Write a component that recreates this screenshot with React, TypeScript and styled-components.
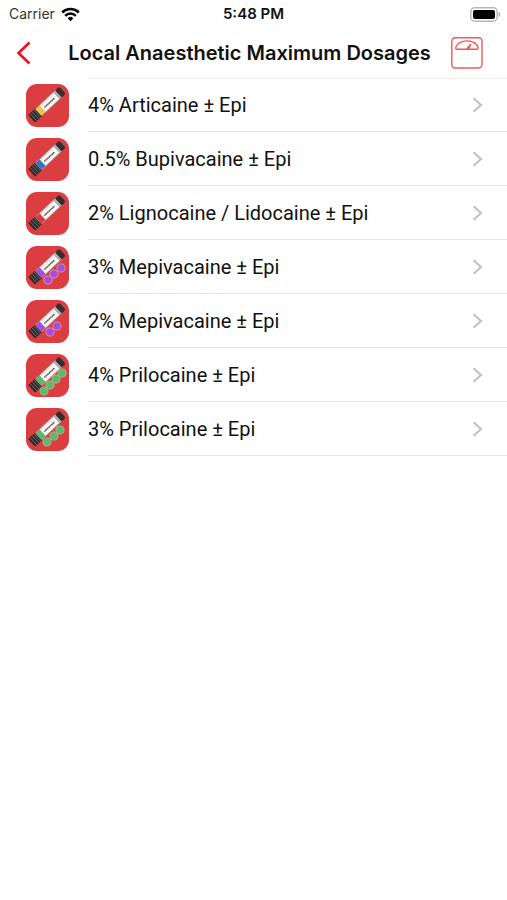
import React from "react";
import styled, { createGlobalStyle } from "styled-components";

const GlobalStyle = createGlobalStyle`
  * { box-sizing: border-box; }
  body {
    margin: 0;
    background: #fff;
    color: #111;
    font-family: Inter, "Liberation Sans", sans-serif;
  }
`;

const Screen = styled.div`
  min-height: 100vh;
  background: #fff;
`;

const StatusBar = styled.div`
  display: grid;
  grid-template-columns: 1fr auto 1fr;
  align-items: center;
  height: 28px;
  padding: 0 6px;
  font-size: 14px;
  line-height: 20px;
`;

const Carrier = styled.div`
  display: flex;
  align-items: center;
  gap: 6px;
  padding-left: 3px;
  color: #333;
`;

const Clock = styled.time`
  font-size: 15px;
  font-weight: 600;
`;

const BatterySlot = styled.div`
  display: flex;
  justify-content: flex-end;
`;

const NavBar = styled.header`
  display: grid;
  grid-template-columns: 48px 1fr 56px;
  align-items: center;
  height: 50px;
`;

const IconButton = styled.button`
  display: flex;
  align-items: center;
  justify-content: center;
  height: 44px;
  padding: 0;
  border: 0;
  background: none;
  cursor: pointer;
`;

const ScaleButton = styled(IconButton)`
  justify-content: flex-start;
`;

const Title = styled.h1`
  margin: 0;
  font-size: 20px;
  line-height: 28px;
  font-weight: 600;
  text-align: center;
  white-space: nowrap;
`;

const List = styled.ul`
  margin: 0;
  padding: 0;
  list-style: none;
`;

const Row = styled.a`
  display: grid;
  grid-template-columns: 62px 1fr;
  align-items: stretch;
  height: 54px;
  padding-left: 26px;
  color: inherit;
  text-decoration: none;
`;

const Thumb = styled.span`
  display: flex;
  align-items: center;
`;

const RowBody = styled.span<{ $first: boolean }>`
  display: flex;
  align-items: center;
  justify-content: space-between;
  padding-right: 24px;
  border-top: ${(p) => (p.$first ? "1px solid #ededee" : "0")};
  border-bottom: 1px solid #e6e6e8;
`;

const Label = styled.span`
  font-family: Roboto, Inter, sans-serif;
  font-size: 20px;
  line-height: 26px;
`;

type Drug = { name: string; band: string; dots?: string; at?: number[][] };

const PURPLE = "#a84be0";
const GREEN = "#55bf67";

const drugs: Drug[] = [
  { name: "4% Articaine ± Epi", band: "#f2c33c" },
  { name: "0.5% Bupivacaine ± Epi", band: "#2f77bd" },
  { name: "2% Lignocaine / Lidocaine ± Epi", band: "#e3343a" },
  { name: "3% Mepivacaine ± Epi", band: PURPLE, dots: PURPLE, at: [[22, 34], [28, 28], [35, 22]] },
  { name: "2% Mepivacaine ± Epi", band: PURPLE, dots: PURPLE, at: [[24, 32], [31, 26]] },
  { name: "4% Prilocaine ± Epi", band: GREEN, dots: GREEN, at: [[18, 37], [24, 31], [30, 25], [36, 19]] },
  { name: "3% Prilocaine ± Epi", band: GREEN, dots: GREEN, at: [[21, 34], [28, 28], [34, 22]] },
];

function Cartridge({ band, dots, at = [] }: Drug) {
  return (
    <svg width="43" height="43" viewBox="0 0 43 43" aria-hidden="true">
      <rect width="43" height="43" rx="11" fill="#dc3d40" />
      <g transform="translate(21 20.5) rotate(-43)">
        <rect x="-21" y="-5.2" width="10" height="10.4" rx="1" fill="#302b2d" />
        <path d="M-18.6-5.2v10.4M-16-5.2v10.4M-13.4-5.2v10.4" stroke="#777274" strokeWidth=".8" />
        <rect x="-12" y="-5" width="28" height="10" rx="1" fill="#9d9394" />
        <rect x="-11.5" y="-4.2" width="6" height="8.4" fill={band} />
        <rect x="-6" y="-4.2" width="19" height="8.4" fill="#faf7f5" />
        <path d="M-4 .4H10" stroke="#554e50" strokeWidth="1.5" strokeDasharray="1.6 .4" />
        <path d="M-5-3H12" stroke="#d2cbca" strokeWidth=".7" />
        <rect x="13" y="-4.2" width="2.5" height="8.4" fill="#b7aeaf" />
        <rect x="15.5" y="-4.8" width="5.5" height="9.6" rx="1.5" fill="#352e31" />
      </g>
      {at.map(([x, y]) => (
        <circle key={x} cx={x} cy={y} r="4.1" fill={dots} stroke="#d9a3a0" strokeWidth=".8" />
      ))}
    </svg>
  );
}

const Wifi = () => (
  <svg width="19" height="15" viewBox="0 0 19 15" aria-hidden="true">
    <g fill="none" stroke="#000" strokeWidth="2.5">
      <path d="M1.2 5.5a11.8 11.8 0 0 1 16.6 0" />
      <path d="M4.2 8.8a7.5 7.5 0 0 1 10.6 0" />
    </g>
    <path d="M9.5 14.2 6.7 11.2a4 4 0 0 1 5.6 0z" />
  </svg>
);

const Battery = () => (
  <svg width="31" height="15" viewBox="0 0 31 15" aria-label="Battery full">
    <rect x=".8" y=".8" width="26.4" height="13.4" rx="4" fill="#fff" stroke="#b5b5b5" strokeWidth="1.4" />
    <rect x="3" y="3" width="22" height="9" rx="2" />
    <path d="M28.7 5v5c2-.8 2-4.2 0-5z" fill="#aaa" />
  </svg>
);

const Back = () => (
  <svg width="16" height="24" viewBox="0 0 16 24" aria-hidden="true">
    <path d="M13.5 1.5 2.5 12l11 10.5" fill="none" stroke="#f50f17" strokeWidth="2.6" />
  </svg>
);

const Scale = () => (
  <svg width="32" height="32" viewBox="0 0 32 32" aria-hidden="true">
    <g fill="none" stroke="#ec5a5e" strokeWidth="1.4" strokeLinejoin="round">
      <rect x=".8" y=".8" width="30.2" height="30.2" rx="3.5" />
      <path d="M4.7 10.6C6.5 1.6 25.5 1.6 27 10.6c.2 1-.2 1.7-1.2 1.7H6c-1 0-1.5-.7-1.3-1.7z" />
      <path d="m15.8 12 4-5M17.5 12l2.3-5" />
    </g>
  </svg>
);

const Chevron = () => (
  <svg width="11" height="16" viewBox="0 0 11 16" aria-hidden="true">
    <path d="m1.5 1.3 7.5 6.7-7.5 6.7" fill="none" stroke="#c2c2c5" strokeWidth="2.2" />
  </svg>
);

export default function App() {
  return (
    <Screen>
      <GlobalStyle />
      <StatusBar>
        <Carrier>Carrier <Wifi /></Carrier>
        <Clock>5:48 PM</Clock>
        <BatterySlot><Battery /></BatterySlot>
      </StatusBar>
      <NavBar>
        <IconButton type="button" aria-label="Back"><Back /></IconButton>
        <Title>Local Anaesthetic Maximum Dosages</Title>
        <ScaleButton type="button" aria-label="Patient weight"><Scale /></ScaleButton>
      </NavBar>
      <List>
        {drugs.map((drug, i) => (
          <li key={drug.name}>
            <Row href="#">
              <Thumb><Cartridge {...drug} /></Thumb>
              <RowBody $first={i === 0}>
                <Label>{drug.name}</Label>
                <Chevron />
              </RowBody>
            </Row>
          </li>
        ))}
      </List>
    </Screen>
  );
}
